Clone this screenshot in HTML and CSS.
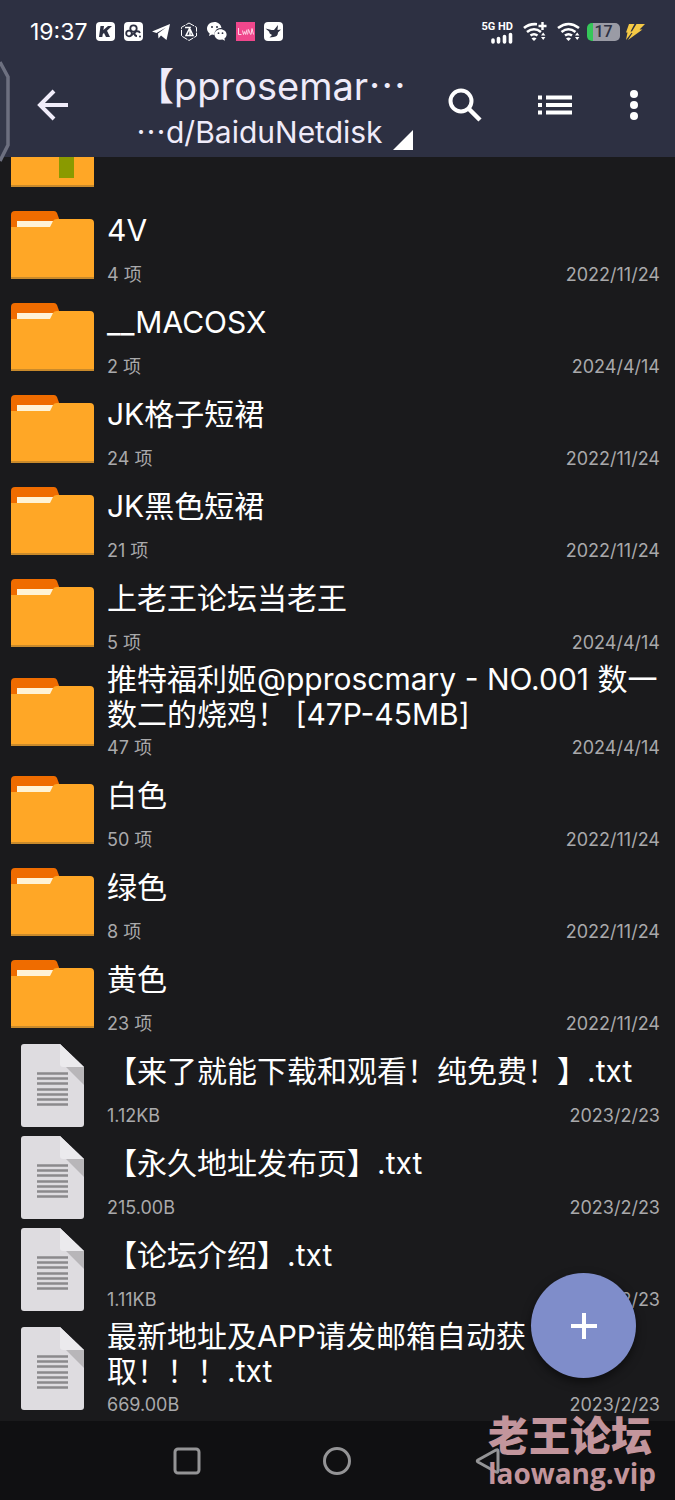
FILE: index.html
```html
<!DOCTYPE html>
<html lang="zh-CN">
<head>
<meta charset="utf-8">
<meta name="viewport" content="width=device-width, initial-scale=1">
<title>BaiduNetdisk</title>
<link rel="stylesheet" href="styles.css">
</head>
<body>
<svg class="defs" aria-hidden="true">
  <symbol id="folder" viewBox="0 0 84 84">
    <path d="M0 12q0-4 4-4H43q2 0 3 2l5 14H0z" fill="#ef6c00"/>
    <path d="M6 18H45V30H6z" fill="#fff3d6"/>
    <path d="M0 24H39l3-6q1-2 4-2H79q4 0 4 4V76H0z" fill="#ffa726"/>
    <path d="M0 74H83V76H0z" fill="#c98a2b"/>
  </symbol>
  <symbol id="file" viewBox="0 0 84 84">
    <path d="M10 3q0-3 3-3H49L73 23V80q0 3-3 3H13q-3 0-3-3z" fill="#dedce0"/>
    <path d="M49 0L73 23H52q-3 0-3-3z" fill="#ebeaed"/>
    <path d="M55 23H73V41z" fill="#b8b6b9"/>
    <path d="M26 29.500h31M26 34.500h31M26 39.500h31M26 45.500h31M26 50.500h31M26 55.500h31M26 60.500h31" stroke="#8b898c" stroke-width="2.500"/>
  </symbol>
</svg>
<div class="screen">
  <header class="top">
    <div class="status">
      <span class="clock">19:37</span>
      <div class="notices">
        <svg viewBox="0 0 20 20"><rect x="1" width="19" height="19" rx="4" fill="#fff"/><path d="M5.500 4h3.500l-.6 4L13 4h4l-5 4.800L15 15h-4l-2-4-1.200 1L7.300 15H4z" fill="#2d3042"/></svg>
        <svg viewBox="0 0 20 20"><rect x="1" width="19" height="19" rx="4" fill="#fff"/><g fill="none" stroke="#2d3042" stroke-width="1.800"><circle cx="10.500" cy="6.500" r="3.200"/><circle cx="6" cy="11.500" r="2.800"/><path d="M8 13.500l5-4q3-1 4 1.500M11.500 11q0 3 2.500 3"/></g><circle cx="17" cy="14.500" r="1" fill="#2d3042"/></svg>
        <svg viewBox="0 0 20 20"><path d="M1 9.500L19 2L15.500 18L10 13.500L7.500 16.500L7 11.500L15 5.500L5.500 11z" fill="#fff"/></svg>
        <svg viewBox="0 0 20 20"><path d="M10 1l7.500 4.300v8.700L10 18.500L2.500 14V5.300z" fill="none" stroke="#fff" stroke-dasharray="6 1"/><path d="M6 5.500h5L7 13.500h7L11 7v6" fill="none" stroke="#fff" stroke-width="1.500"/></svg>
        <svg viewBox="0 0 20 20"><path d="M7.500 0C3.500 0 0 2.800 0 6.500c0 2 1 3.700 2.700 5L2 14l3-1.500 2.500.4A6 6 0 0 1 14.500 6C14 2.500 11 0 7.500 0z" fill="#fff"/><path d="M13.500 7.200c-3.300 0-6 2.300-6 5.300s2.700 5.300 6 5.300l2-.3 2.500 1.300-.6-2.200c1.400-1 2.200-2.400 2.200-4.100 0-3-2.800-5.300-6.100-5.300z" fill="#fff"/><g fill="#2d3042"><circle cx="5" cy="5" r="1"/><circle cx="10" cy="5" r="1"/><circle cx="11.500" cy="11.200" r=".9"/><circle cx="15.500" cy="11.200" r=".9"/></g></svg>
        <svg viewBox="0 0 20 20"><rect x="1" width="19" height="19" fill="#f0478c"/><path d="M3.500 6v6.500h3M7.500 8.500l1 4 1.200-3 1 3 1.300-5M12.500 12.500l1-5 2 5M16 12.500l1-6 1.500 6" fill="none" stroke="#ffd3e5"/></svg>
        <svg viewBox="0 0 20 20"><rect x="1" width="19" height="19" rx="4" fill="#fff"/><path d="M2.500 6.500l6 1.500L11 8l4-5-.5 5 3.500-.5-3 3q0 4-4.500 4.500l-4 .5 2.500-2.500q-3-1.500-3-3.500z" fill="#2d3042"/></svg>
      </div>
      <div class="signals">
        <div class="cell"><span>5G HD</span>
          <svg class="bars" viewBox="0 0 24 12"><path d="M4 10V8M9.500 10V6.500M15.500 10V4.500M21.500 10V2.500" stroke="#fff" stroke-width="3.600" stroke-linecap="round"/></svg></div>
        <svg class="wifi" viewBox="0 0 24 20"><g fill="none" stroke="#fff" stroke-width="2.600"><path d="M1 6q5-4.500 13-3.800M4 10q7-5.500 14 0M7.500 13.500q3.500-2.500 7 0"/></g><path d="M8.500 16.500q2.500-2 5 0L11 19z" fill="#fff"/><path d="M19.500 0v8M15.500 4h8" stroke="#fff" stroke-width="2.400"/><path d="M18 13.500l2.200-3 2.200 3zM18 15l2.200 3 2.200-3z" fill="#fff"/></svg>
        <svg class="wifi" viewBox="0 0 24 20"><g fill="none" stroke="#fff" stroke-width="2.600"><path d="M1 6q10.500-8 21 0M4.500 10q7-5.500 14 0M8 13.500q3.500-2.500 7 0"/></g><path d="M9 16.500q2.500-2 5 0L11.500 19z" fill="#fff"/><path d="M18 13.500l2.200-3 2.200 3zM18 15l2.200 3 2.200-3z" fill="#fff"/></svg>
        <span class="battery">17</span>
        <svg class="bolt" viewBox="0 0 20 18"><path d="M4 1h5.500L5.500 8.500h2L1 17l1.500-7.500H1z" fill="#f5c945"/><path d="M11.500 1H20l-5.500 5.500h3L3 17l4.500-7H6z" fill="#f5c945"/></svg>
      </div>
    </div>
    <div class="toolbar">
      <button class="tool back" aria-label="返回"><svg viewBox="0 0 32 32"><path d="M32 16H4M18 2L4 16L18 30" fill="none" stroke="#f0ecfa" stroke-width="4"/></svg></button>
      <button class="path">
        <span class="path-name">【pprosemar<span class="dots">…</span></span>
        <span class="path-dir"><span class="dots">…</span>d/BaiduNetdisk</span>
        <svg class="corner" viewBox="0 0 20 20"><path d="M20 0V20H0z" fill="#fff"/></svg>
      </button>
      <button class="tool search" aria-label="搜索"><svg viewBox="0 0 36 36"><circle cx="14" cy="14" r="10.500" fill="none" stroke="#fff" stroke-width="4"/><path d="M22 22L33 33" stroke="#fff" stroke-width="4.500"/></svg></button>
      <button class="tool view" aria-label="列表视图"><svg viewBox="0 0 36 36"><path d="M1 10.500h4M1 18h4M1 25.500h4M9 10.500h26M9 18h26M9 25.500h26" stroke="#fff" stroke-width="4"/></svg></button>
      <button class="tool more" aria-label="更多"><svg viewBox="0 0 36 36"><g fill="#fff"><circle cx="18" cy="7" r="4"/><circle cx="18" cy="18" r="4"/><circle cx="18" cy="29" r="4"/></g></svg></button>
    </div>
    <svg class="edge" viewBox="0 0 10 104" aria-hidden="true"><path d="M0 2L8 17V85L0 101" fill="#343849" stroke="#6d7080" stroke-width="3.500"/></svg>
  </header>

  <main class="files">
    <ul class="list">
      <li class="row cut"><svg class="thumb" viewBox="0 0 84 84"><use href="#folder"/><path d="M48 36H63V67H48z" fill="#8a9a00"/></svg></li>
      <li class="row"><svg class="thumb"><use href="#folder"/></svg><div class="info"><span class="name">4V</span><span class="meta"><span>4 项</span><time>2022/11/24</time></span></div></li>
      <li class="row"><svg class="thumb"><use href="#folder"/></svg><div class="info"><span class="name">__MACOSX</span><span class="meta"><span>2 项</span><time>2024/4/14</time></span></div></li>
      <li class="row"><svg class="thumb"><use href="#folder"/></svg><div class="info"><span class="name">JK格子短裙</span><span class="meta"><span>24 项</span><time>2022/11/24</time></span></div></li>
      <li class="row"><svg class="thumb"><use href="#folder"/></svg><div class="info"><span class="name">JK黑色短裙</span><span class="meta"><span>21 项</span><time>2022/11/24</time></span></div></li>
      <li class="row"><svg class="thumb"><use href="#folder"/></svg><div class="info"><span class="name">上老王论坛当老王</span><span class="meta"><span>5 项</span><time>2024/4/14</time></span></div></li>
      <li class="row"><svg class="thumb"><use href="#folder"/></svg><div class="info"><span class="name">推特福利姬@pproscmary - NO.001 数一数二的烧鸡！ [47P-45MB]</span><span class="meta"><span>47 项</span><time>2024/4/14</time></span></div></li>
      <li class="row"><svg class="thumb"><use href="#folder"/></svg><div class="info"><span class="name">白色</span><span class="meta"><span>50 项</span><time>2022/11/24</time></span></div></li>
      <li class="row"><svg class="thumb"><use href="#folder"/></svg><div class="info"><span class="name">绿色</span><span class="meta"><span>8 项</span><time>2022/11/24</time></span></div></li>
      <li class="row"><svg class="thumb"><use href="#folder"/></svg><div class="info"><span class="name">黄色</span><span class="meta"><span>23 项</span><time>2022/11/24</time></span></div></li>
      <li class="row"><svg class="thumb"><use href="#file"/></svg><div class="info"><span class="name">【来了就能下载和观看！纯免费！】.txt</span><span class="meta"><span>1.12KB</span><time>2023/2/23</time></span></div></li>
      <li class="row"><svg class="thumb"><use href="#file"/></svg><div class="info"><span class="name">【永久地址发布页】.txt</span><span class="meta"><span>215.00B</span><time>2023/2/23</time></span></div></li>
      <li class="row"><svg class="thumb"><use href="#file"/></svg><div class="info"><span class="name">【论坛介绍】.txt</span><span class="meta"><span>1.11KB</span><time>2023/2/23</time></span></div></li>
      <li class="row"><svg class="thumb"><use href="#file"/></svg><div class="info"><span class="name">最新地址及APP请发邮箱自动获取！！！.txt</span><span class="meta"><span>669.00B</span><time>2023/2/23</time></span></div></li>
    </ul>
    <button class="fab" aria-label="新建"><svg viewBox="0 0 28 28"><path d="M14 1V27M1 14H27" stroke="#fff" stroke-width="4"/></svg></button>
  </main>

  <nav class="nav">
    <button aria-label="最近任务"><svg viewBox="0 0 28 28"><rect x="2" y="2" width="24" height="24" rx="3"/></svg></button>
    <button aria-label="主页"><svg viewBox="0 0 28 28"><circle cx="14" cy="14" r="12.500"/></svg></button>
    <button aria-label="后退"><svg viewBox="0 0 28 28"><path d="M24 4V24q0 2-2 1L4 15q-1.500-1 0-2L22 3q2-1 2 1z"/></svg></button>
  </nav>
  <div class="mark"><strong>老王论坛</strong><span>laowang.vip</span></div>
</div>
</body>
</html>
```
FILE: styles.css
```css
* { box-sizing: border-box; }

body {
  margin: 0;
  background: #1a1a1c;
  color: #fff;
  font-family: Inter, "Noto Sans CJK SC", sans-serif;
  text-spacing-trim: space-all;
}

button {
  padding: 0;
  border: 0;
  background: none;
  color: inherit;
  font: inherit;
}

svg { display: block; }

.defs { position: absolute; width: 0; height: 0; }

.screen {
  position: relative;
  display: flex;
  flex-direction: column;
  min-height: 100vh;
}

/* Header */
.top {
  position: relative;
  background: #2d3042;
}

.status {
  display: flex;
  align-items: center;
  height: 64px;
  padding: 0 30px;
}

.clock { width: 65px; font-size: 23px; }

.notices { display: flex; flex: 1; gap: 8px; }
.notices svg { width: 20px; height: 20px; }

.signals { display: flex; align-items: center; gap: 10px; }

.cell {
  display: flex;
  flex-direction: column;
  align-items: flex-end;
  font-family: Roboto, sans-serif;
  font-size: 11px;
  font-weight: 700;
  line-height: 11px;
}

.bars { width: 24px; height: 12px; }
.wifi { width: 24px; height: 20px; }

.battery {
  width: 33px;
  margin-left: -4px;
  border-radius: 5px;
  background: linear-gradient(to right, #35c759 6px, #9a9ba5 6px);
  color: #2d3042;
  font-family: Roboto, sans-serif;
  font-size: 16px;
  font-weight: 500;
  line-height: 18px;
  text-align: center;
}

.bolt { width: 20px; height: 18px; margin-left: -5px; }

.toolbar {
  display: flex;
  align-items: center;
  height: 93px;
  padding: 0 23px 11px 36px;
}

.tool svg { width: 36px; height: 36px; }
.tool.back svg { width: 32px; height: 32px; }

.path {
  position: relative;
  display: flex;
  flex: 1;
  flex-direction: column;
  max-width: 277px;
  margin: 0 auto 0 68px;
  padding-top: 4px;
  color: #efebf9;
  text-align: left;
  white-space: nowrap;
}

.path-name { font-size: 38px; line-height: 46px; }
.path-dir { font-size: 30px; line-height: 42px; }
.dots { font-family: "Noto Sans CJK SC", sans-serif; }

.corner {
  position: absolute;
  right: 0;
  bottom: 3px;
  width: 20px;
  height: 20px;
}

.tool.view { margin-left: 54px; }
.tool.more { margin-left: 43px; }

.edge {
  position: absolute;
  top: 60px;
  left: 0;
  width: 10px;
  height: 104px;
}

/* File list */
.files { position: relative; flex: 1; }

.list { margin: 0; padding: 0; list-style: none; }

.row {
  display: flex;
  align-items: center;
  gap: 12px;
  padding: 0 15px 0 11px;
}

.row.cut {
  align-items: flex-end;
  height: 42px;
  padding-bottom: 4px;
  overflow: hidden;
}

.thumb { flex: none; width: 84px; height: 84px; }

.info { flex: 1; padding: 3px 0 5px; }

.name {
  display: flex;
  align-items: center;
  min-height: 57px;
  font-size: 30px;
  line-height: 35px;
}

.meta {
  display: flex;
  justify-content: space-between;
  margin-top: 5px;
  color: #a9a9ab;
  font-size: 18px;
  line-height: 22px;
}

.fab {
  position: absolute;
  right: 39px;
  bottom: 43px;
  display: grid;
  place-items: center;
  width: 105px;
  height: 105px;
  border-radius: 50%;
  background: #7f8dca;
  box-shadow: 0 4px 10px rgba(0, 0, 0, .5);
}

.fab svg { width: 28px; height: 28px; }

/* System navigation */
.nav {
  display: flex;
  height: 79px;
  padding: 0 112px;
  background: #101012;
}

.nav button { display: grid; flex: 1; place-items: center; }

.nav svg {
  width: 28px;
  height: 28px;
  fill: none;
  stroke: #949496;
  stroke-width: 3;
}

.mark {
  position: absolute;
  right: 19px;
  bottom: 11px;
  display: flex;
  flex-direction: column;
  color: #c2959c;
  font-family: "Open Sans", "Noto Sans CJK SC", sans-serif;
  font-weight: 700;
  pointer-events: none;
}

.mark strong { font-size: 41px; line-height: 44px; }
.mark span { font-size: 28px; line-height: 32px; }
```
